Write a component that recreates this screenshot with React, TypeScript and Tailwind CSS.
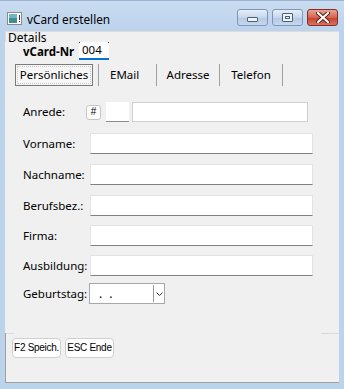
import React from "react";

function Field({ label, children }: { label: string; children: React.ReactNode }) {
  return (
    <div className="flex items-center h-[21px]">
      <div className="w-[67px] text-[11.5px] leading-[14px] text-[#000] whitespace-nowrap">{label}</div>
      {children}
    </div>
  );
}

function TextBox() {
  return (
    <div className="w-[223px] h-[21px] bg-white border border-[#e3e3e3] border-b-[#808080]" />
  );
}

export default function App() {
  return (
    <div className="w-[344px] h-[389px] bg-[#bcd3ec] flex flex-col font-['Noto_Sans',sans-serif] text-black overflow-hidden text-[12px] leading-[14px]">
      {/* title bar */}
      <div className="h-[31px] flex items-start shrink-0 bg-[linear-gradient(to_bottom,#c9dbf0,#bcd3ec)] border-t border-[#9fb6d2]">
        <div className="ml-[7px] mt-[11px] w-[15px] h-[13px]">
          <svg width="15" height="13" viewBox="0 0 15 13">
            <rect x="0.5" y="0.5" width="14" height="12" fill="#ffffff" stroke="#8a8a8a" />
            <rect x="2" y="2" width="8" height="9" fill="#3f8f8a" />
            <rect x="2" y="2" width="8" height="4" fill="#6fb4c8" />
            <rect x="12" y="3" width="1" height="5" fill="#333" />
            <rect x="12" y="9" width="1" height="1" fill="#333" />
          </svg>
        </div>
        <div className="ml-[5px] mt-[10px] text-[11.8px] leading-[16px] text-black">vCard erstellen</div>
        <div className="ml-auto mr-[6px] mt-[8px] flex gap-[4px]">
          <div className="w-[31px] h-[17px] rounded-[3px] border border-[#7d97b8] bg-[linear-gradient(to_bottom,#e6eef8,#c6d7ec_50%,#b3c9e3_51%,#c5d8ee)] flex items-center justify-center">
            <div className="w-[11px] h-[5px] mt-[4px] rounded-[1px] border border-[#4b5f78] bg-[#eef3f9]" />
          </div>
          <div className="w-[31px] h-[17px] rounded-[3px] border border-[#7d97b8] bg-[linear-gradient(to_bottom,#e6eef8,#c6d7ec_50%,#b3c9e3_51%,#c5d8ee)] flex items-center justify-center">
            <div className="w-[11px] h-[9px] rounded-[1px] border border-[#4b5f78] bg-[#eef3f9] flex items-center justify-center">
              <div className="w-[5px] h-[3px] border border-[#4b5f78]" />
            </div>
          </div>
          <div className="w-[31px] h-[17px] rounded-[3px] border border-[#8a2d22] bg-[linear-gradient(to_bottom,#e8a493,#d5624f_50%,#c5412c_51%,#d8745f)] flex items-center justify-center">
            <svg width="14" height="11" viewBox="0 0 14 11">
              <path d="M2 1 L12 10 M12 1 L2 10" stroke="#5a1a12" strokeWidth="4" strokeLinecap="round" />
              <path d="M2 1 L12 10 M12 1 L2 10" stroke="#ffffff" strokeWidth="2.2" strokeLinecap="round" />
            </svg>
          </div>
        </div>
      </div>

      {/* client area */}
      <div className="mx-[5px] mb-[6px] flex-1 bg-[#f0f0f0] flex flex-col">
        {/* group box top line + label */}
        <div className="h-[11px] border-t border-l border-[#dcdcdc] pl-[2px] text-[12px] leading-[11px] whitespace-nowrap">
          Details
        </div>

        {/* vCard-Nr row */}
        <div className="h-[18px] flex items-center pl-[18px]">
          <div className="w-[56px] text-[11.5px] font-bold leading-[12px] mt-[2px] whitespace-nowrap">vCard-Nr</div>
          <div className="relative w-[30px] h-[18px] bg-white border-b-2 border-[#0a6fd1] flex items-center pl-[3px] text-[11.5px] leading-[12px]">
            004
            <div className="absolute left-0 top-0 w-[1px] h-[1px] bg-[#333]" />
            <div className="absolute right-0 top-0 w-[1px] h-[1px] bg-[#333]" />
          </div>
        </div>

        {/* tabs */}
        <div className="h-[23px] mt-[4px] flex items-end pl-[10px]">
          <div className="w-[78px] h-[22px] border border-[#7a7a7a] bg-[#f6f6f6] p-[1px] mb-[1px]">
            <div className="w-full h-full border border-dotted border-[#c8c8c8] flex items-center justify-center text-[11.5px] leading-[14px]">
              Persönliches
            </div>
          </div>
          <div className="w-[1px] h-[22px] bg-[#a0a0a0] ml-[5px] mb-[1px]" />
          <div className="w-[57px] h-[22px] flex items-start pt-[3px] pl-[11px] text-[11.5px] leading-[14px]">EMail</div>
          <div className="w-[1px] h-[22px] bg-[#a0a0a0] mb-[1px]" />
          <div className="w-[62px] h-[22px] flex items-start pt-[3px] justify-center text-[11.5px] leading-[14px]">Adresse</div>
          <div className="w-[1px] h-[22px] bg-[#a0a0a0] mb-[1px]" />
          <div className="w-[62px] h-[22px] flex items-start pt-[3px] justify-center text-[11.5px] leading-[14px]">Telefon</div>
          <div className="w-[1px] h-[22px] bg-[#a0a0a0] mb-[1px]" />
        </div>

        {/* form */}
        <div className="pl-[18px] flex flex-col mt-[15px]">
          <div className="flex items-center h-[20px]">
            <div className="w-[63px] text-[11.5px] leading-[14px]">Anrede:</div>
            <div className="w-[15px] h-[15px] rounded-[3px] border border-[#c6c6c6] bg-white flex items-center justify-center text-[10px] leading-[10px] font-['Liberation_Sans',sans-serif]">#</div>
            <div className="ml-[5px] w-[23px] h-[20px] bg-white border-b border-[#8c8c8c]" />
            <div className="ml-[3px] w-[176px] h-[20px] bg-white border border-[#cfcfcf]" />
          </div>
          <div className="mt-[11px] flex flex-col gap-[10px]">
            <Field label="Vorname:"><TextBox /></Field>
            <Field label="Nachname:"><TextBox /></Field>
            <Field label="Berufsbez.:"><TextBox /></Field>
            <div className="-mt-[1px]"><Field label="Firma:"><TextBox /></Field></div>
            <div className="-mt-[1px]"><Field label="Ausbildung:"><TextBox /></Field></div>
          </div>
          <div className="flex items-center h-[21px] mt-[7px]">
            <div className="w-[66px] text-[11.5px] leading-[14px]">Geburtstag:</div>
            <div className="w-[76px] h-[21px] bg-white border border-[#a8a8a8] flex">
              <div className="flex-1 flex items-end pb-[3px] pl-[9px] gap-[7px] text-[12px] leading-[12px]">
                <span>.</span>
                <span>.</span>
              </div>
              <div className="w-[1px] bg-[#9a9a9a] my-[1px]" />
              <div className="w-[10px] flex items-center justify-center">
                <svg width="7" height="4" viewBox="0 0 7 4">
                  <path d="M0.5 0.5 L3.5 3.5 L6.5 0.5" stroke="#333" fill="none" strokeWidth="1" />
                </svg>
              </div>
            </div>
          </div>
        </div>

        {/* bottom panel */}
        <div className="mt-auto h-[50px] border-l border-b border-[#a0a0a0] relative flex items-start pt-[5px] pl-[6px] gap-[4px]">
          <div className="absolute left-0 top-0 w-[8px] h-[1px] bg-[#dadada]" />
          <div className="absolute right-0 top-0 w-[18px] h-[1px] bg-[#dadada]" />
          <div className="w-[49px] h-[20px] rounded-[4px] border border-[#cfcfcf] bg-white flex items-center justify-center text-[10px] tracking-[-0.3px] leading-[12px] font-['Liberation_Sans',sans-serif] whitespace-nowrap">F2 Speich.</div>
          <div className="w-[49px] h-[20px] rounded-[4px] border border-[#cfcfcf] bg-white flex items-center justify-center text-[10px] tracking-[-0.3px] leading-[12px] font-['Liberation_Sans',sans-serif] whitespace-nowrap">ESC Ende</div>
        </div>
      </div>
    </div>
  );
}
